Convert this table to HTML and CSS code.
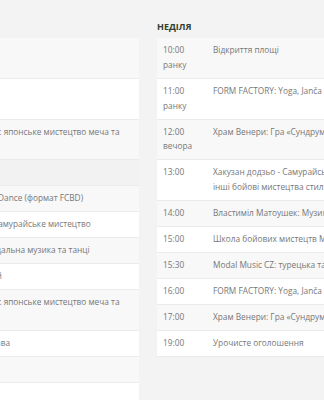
FILE: index.html
```html
<!DOCTYPE html>
<html lang="uk">
<head>
<meta charset="utf-8">
<title>Програма</title>
<link rel="stylesheet" href="styles.css">
</head>
<body>
<div class="schedule">
  <section class="day day-sat">
    <h3 class="day-title">Субота</h3>
    <table class="program">
      <tbody>
        <tr><td class="time">10:00 ранку</td><td class="event">Відкриття</td></tr>
        <tr><td class="time">11:00 ранку</td><td class="event">Ранкова йога</td></tr>
        <tr><td class="time">12:00 вечора</td><td class="event">Хакузан додзьо: японське мистецтво меча та кендо</td></tr>
        <tr class="pause"><td class="time">13:00</td><td class="event">Обід</td></tr>
        <tr><td class="time">14:00</td><td class="event">ATS Tribal Belly Dance (формат FCBD)</td></tr>
        <tr><td class="time">15:00</td><td class="event">Хакузан Будо: самурайське мистецтво</td></tr>
        <tr><td class="time">15:30</td><td class="event">Гурт Modal: модальна музика та танці</td></tr>
        <tr><td class="time">16:00</td><td class="event">Шоу кагура-май</td></tr>
        <tr><td class="time">17:00</td><td class="event">Хакузан додзьо: японське мистецтво меча та кендо</td></tr>
        <tr><td class="time">18:00</td><td class="event">Вогненна вистава</td></tr>
        <tr><td class="time">19:00</td><td class="event">Концерт</td></tr>
        <tr><td class="time">20:00</td><td class="event">Танці</td></tr>
      </tbody>
    </table>
  </section>
  <section class="day day-sun">
    <h3 class="day-title">Неділя</h3>
    <table class="program">
      <tbody>
        <tr><td class="time">10:00 ранку</td><td class="event">Відкриття площі</td></tr>
        <tr><td class="time">11:00 ранку</td><td class="event">FORM FACTORY: Yoga, Janča Nováková</td></tr>
        <tr><td class="time">12:00 вечора</td><td class="event">Храм Венери: Гра «Сундрум» та медитація</td></tr>
        <tr><td class="time">13:00</td><td class="event">Хакузан додзьо - Самурайське мистецтво меча та інші бойові мистецтва стилю кендо</td></tr>
        <tr><td class="time">14:00</td><td class="event">Властиміл Матоушек: Музика для душі</td></tr>
        <tr><td class="time">15:00</td><td class="event">Школа бойових мистецтв Мусасі</td></tr>
        <tr><td class="time">15:30</td><td class="event">Modal Music CZ: турецька та перська музика</td></tr>
        <tr><td class="time">16:00</td><td class="event">FORM FACTORY: Yoga, Janča Nováková</td></tr>
        <tr><td class="time">17:00</td><td class="event">Храм Венери: Гра «Сундрум» та медитація</td></tr>
        <tr><td class="time">19:00</td><td class="event">Урочисте оголошення</td></tr>
      </tbody>
    </table>
  </section>
</div>
</body>
</html>
```

FILE: styles.css
```css
html, body {
  margin: 0;
  padding: 0;
  overflow: hidden;
  background: #f3f3f3;
}

body {
  font-family: "Open Sans", "Noto Sans", sans-serif;
  font-size: 8.3px;
  color: #777777;
}

.schedule {
  display: flex;
  gap: 18px;
  margin-left: -119px;
  padding-top: 21px;
  width: max-content;
}

.day-sat {
  flex: 0 0 258px;
}

.day-sun {
  flex: 0 0 273px;
}

.day-title {
  margin: 0 0 5px;
  font-size: 9px;
  line-height: 12px;
  font-weight: 700;
  text-transform: uppercase;
  color: #34402c;
}

.program {
  width: 100%;
  border-collapse: collapse;
  table-layout: fixed;
}

.program td {
  padding: 5.125px 6px;
  line-height: 14.75px;
  vertical-align: top;
  border-bottom: 1px solid #ebebeb;
}

.program tr:nth-child(odd) {
  background: #f8f8f8;
}

.program tr:nth-child(even) {
  background: #ffffff;
}

.program tr.pause {
  background: #f2f2f2;
}

.program .time {
  width: 50px;
  box-sizing: border-box;
}
```
